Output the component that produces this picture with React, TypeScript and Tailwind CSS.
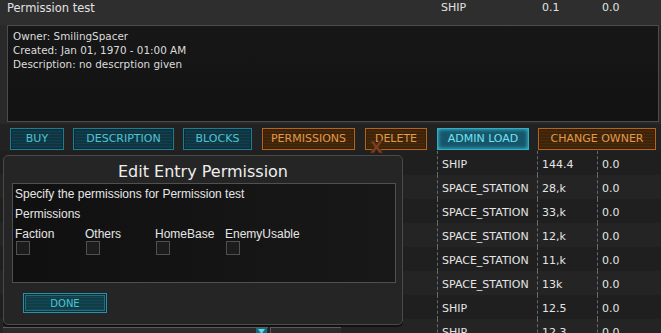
import React from 'react';

const rows: [string, string, string][] = [
  ['SHIP', '144.4', '0.0'],
  ['SPACE_STATION', '28,k', '0.0'],
  ['SPACE_STATION', '33,k', '0.0'],
  ['SPACE_STATION', '12,k', '0.0'],
  ['SPACE_STATION', '11,k', '0.0'],
  ['SPACE_STATION', '13k', '0.0'],
  ['SHIP', '12.5', '0.0'],
  ['SHIP', '12.3', '0.0'],
];

const cyanBtn =
  'h-[22px] flex items-center justify-center border border-[#1d7d92] shadow-[inset_0_0_0_1px_#0b2b34] bg-[repeating-linear-gradient(0deg,#0e3541_0px,#0e3541_2px,#12404d_2px,#12404d_3px)] text-[#4fc3d4] text-[11px]';
const orangeBtn =
  'h-[22px] flex items-center justify-center border border-[#b2661c] shadow-[inset_0_0_0_1px_#3a1e06] bg-[repeating-linear-gradient(0deg,#3d2309_0px,#3d2309_2px,#4a2b0c_2px,#4a2b0c_3px)] text-[#e09a48] text-[11px]';

const perms = ['Faction', 'Others', 'HomeBase', 'EnemyUsable'];

const App: React.FC = () => {
  return (
    <div className="relative w-[661px] h-[333px] overflow-hidden bg-[#1e1e1e] font-['DejaVu_Sans',sans-serif] text-[#e2e2e2]">
      {/* header row */}
      <div className="flex h-[25px] items-start bg-[#2e2e2e] pt-[1px] text-[11.5px] leading-[14px]">
        <div className="w-[437px] pl-[7px]">Permission test</div>
        <div className="w-[100px] pl-[4px] text-[11px]">SHIP</div>
        <div className="w-[60px] pl-[5px] text-[11px]">0.1</div>
        <div className="pl-[5px] text-[11px]">0.0</div>
      </div>

      {/* description box */}
      <div className="bg-[#292929] pl-[7px] pr-[2px] pb-[2px]">
        <div className="h-[97px] border border-[#4c4c4c] bg-[linear-gradient(180deg,#171717,#121212)] px-[5px] pt-[3px] text-[10.4px] leading-[14px] text-[#dcdcdc]">
          <div>Owner: SmilingSpacer</div>
          <div>Created: Jan 01, 1970 - 01:00 AM</div>
          <div>Description: no descrption given</div>
        </div>
      </div>

      {/* buttons */}
      <div className="flex h-[27px] items-start bg-[#222] pt-[4px]">
        <div className={`${cyanBtn} ml-[10px] w-[54px]`}>BUY</div>
        <div className={`${cyanBtn} ml-[9px] w-[101px]`}>DESCRIPTION</div>
        <div className={`${cyanBtn} ml-[9px] w-[69px]`}>BLOCKS</div>
        <div className={`${orangeBtn} ml-[10px] w-[93px]`}>PERMISSIONS</div>
        <div className={`${orangeBtn} ml-[10px] w-[62px]`}>DELETE</div>
        <div className="ml-[10px] flex h-[22px] w-[92px] items-center justify-center border border-[#2bb0c8] bg-[#17566a] text-[11px] text-[#72e2f2] shadow-[inset_0_0_4px_#3fc8e0]">
          ADMIN LOAD
        </div>
        <div className={`${orangeBtn} ml-[9px] w-[118px]`}>CHANGE OWNER</div>
      </div>

      {/* table */}
      <div className="text-[11px] text-[#e4e4e4]">
        {rows.map((r, i) => (
          <div key={i} className={`flex h-[24px] ${i % 2 === 0 ? 'bg-[#1f1f1f]' : 'bg-[#242424]'}`}>
            <div className="w-[437px]" />
            <div className="flex h-full w-[100px] items-center border-l border-dashed border-[#6a6a6a] pl-[4px] pt-[4px]">{r[0]}</div>
            <div className="flex h-full w-[60px] items-center border-l border-dashed border-[#6a6a6a] pl-[4px] pt-[4px]">{r[1]}</div>
            <div className="flex h-full items-center border-l border-dashed border-[#6a6a6a] pl-[4px] pt-[4px]">{r[2]}</div>
          </div>
        ))}
      </div>

      {/* dialog window */}
      <div className="absolute left-[3px] top-[155px] flex h-[170px] w-[400px] flex-col rounded-[5px] border border-[#4a4a4a] bg-[#252525] shadow-[0_2px_0_#111]">
        <div className="h-[27px] pt-[6px] text-center text-[16px] leading-[20px] text-[#eeeeee]">Edit Entry Permission</div>
        <div className="ml-[8px] mr-[6px] h-[100px] border border-[#505050] bg-[linear-gradient(90deg,#101010,#181818)] px-[2px] font-['Liberation_Sans',sans-serif] text-[12px] text-[#e6e6e6]">
          <div className="leading-[18px] pt-[1px]">Specify the permissions for Permission test</div>
          <div className="leading-[22px]">Permissions</div>
          <div className="mt-[2px] flex">
            {perms.map((p) => (
              <div key={p} className="w-[70px]">
                <div className="leading-[14px]">{p}</div>
                <div className="ml-[1px] h-[14px] w-[14px] border border-[#505050] bg-[#1c1c1c]" />
              </div>
            ))}
          </div>
        </div>
        <div className="ml-[19px] mt-[10px] flex h-[20px] w-[84px] items-center justify-center border border-[#2a90a8] shadow-[inset_0_0_0_1px_#0c2c36,inset_0_0_0_2px_#1e6e80] bg-[repeating-linear-gradient(0deg,#0f3d48_0px,#0f3d48_2px,#134753_2px,#134753_3px)] text-[10px] text-[#4fc3d4]">
          DONE
        </div>
      </div>

      {/* lower panel edges */}
      <div className="absolute left-[3px] top-[327px] flex h-[8px] w-[265px] justify-end border-t border-[#5a5a5a] bg-[#2c2c2c]">
        <svg width="11" height="7" viewBox="0 0 11 7" className="mr-[1px]">
          <rect x="0" y="0" width="11" height="7" fill="#1b6a7e" />
          <path d="M2 1 L9 1 L5.5 6 Z" fill="#5fd6ea" />
        </svg>
      </div>
      <div className="absolute left-[270px] top-[327px] h-[8px] w-[71px] border-t border-l border-[#5a5a5a] bg-[#2c2c2c]" />

      {/* cursor */}
      <svg className="absolute left-[369px] top-[140px]" width="15" height="14" viewBox="0 0 15 14">
        <path d="M1 1 L5 1 L7.5 5 L10 1 L14 1 L9.5 7 L14 13 L10 13 L7.5 9 L5 13 L1 13 L5.5 7 Z" fill="#7a3f20" stroke="#4a2410" strokeWidth="0.8" />
      </svg>
    </div>
  );
};

export default App;
